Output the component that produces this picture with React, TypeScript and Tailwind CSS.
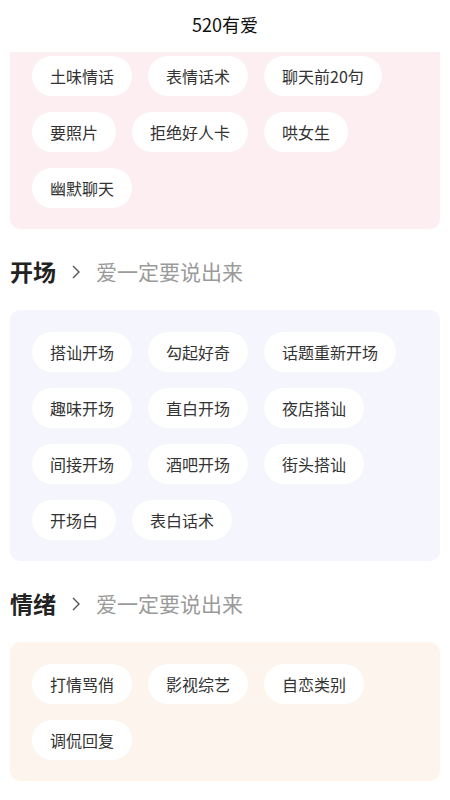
import React from "react"

interface Section {
  title?: string
  bg: string
  items: string[]
}

const sections: Section[] = [
  {
    bg: "bg-[#fdeef2]",
    items: ["土味情话", "表情话术", "聊天前20句", "要照片", "拒绝好人卡", "哄女生", "幽默聊天"],
  },
  {
    title: "开场",
    bg: "bg-[#f4f5fd]",
    items: [
      "搭讪开场",
      "勾起好奇",
      "话题重新开场",
      "趣味开场",
      "直白开场",
      "夜店搭讪",
      "间接开场",
      "酒吧开场",
      "街头搭讪",
      "开场白",
      "表白话术",
    ],
  },
  {
    title: "情绪",
    bg: "bg-[#fdf5ed]",
    items: ["打情骂俏", "影视综艺", "自恋类别", "调侃回复"],
  },
]

function Chips({ items }: { items: string[] }) {
  return (
    <div className="flex flex-wrap gap-x-4 gap-y-4">
      {items.map(label => (
        <div
          key={label}
          className="h-10 px-[18px] flex items-center rounded-full bg-white text-[16px] text-[#333] whitespace-nowrap"
        >
          {label}
        </div>
      ))}
    </div>
  )
}

export default function App() {
  return (
    <div
      className="w-[450px] h-[800px] overflow-hidden bg-white"
      style={{ fontFamily: '"Noto Sans CJK SC", "Noto Sans", sans-serif' }}
    >
      {/* 顶部标题栏 */}
      <div className="h-[52px] flex items-center justify-center pb-[4px]">
        <span className="text-[18px] text-[#111]">520有爱</span>
      </div>

      <div className="px-[10px]">
        {sections.map((s, idx) => (
          <div key={idx}>
            {s.title && (
              <div className="h-[81px] flex items-center pt-[4px]">
                <span className="text-[23px] font-bold text-[#222] leading-none">{s.title}</span>
                <svg width="10" height="16" viewBox="0 0 10 16" className="ml-[15px] mr-[15px]">
                  <path d="M2 2 L8 8 L2 14" fill="none" stroke="#555" strokeWidth="1.4" />
                </svg>
                <span className="text-[21px] text-[#9a9a9a] leading-none">爱一定要说出来</span>
              </div>
            )}
            <div
              className={`${s.bg} ${idx === 0 ? "rounded-b-[10px] pt-[4px]" : "rounded-[10px] pt-[22px]"} px-[22px] pb-[21px]`}
            >
              <Chips items={s.items} />
            </div>
          </div>
        ))}
      </div>
    </div>
  )
}
